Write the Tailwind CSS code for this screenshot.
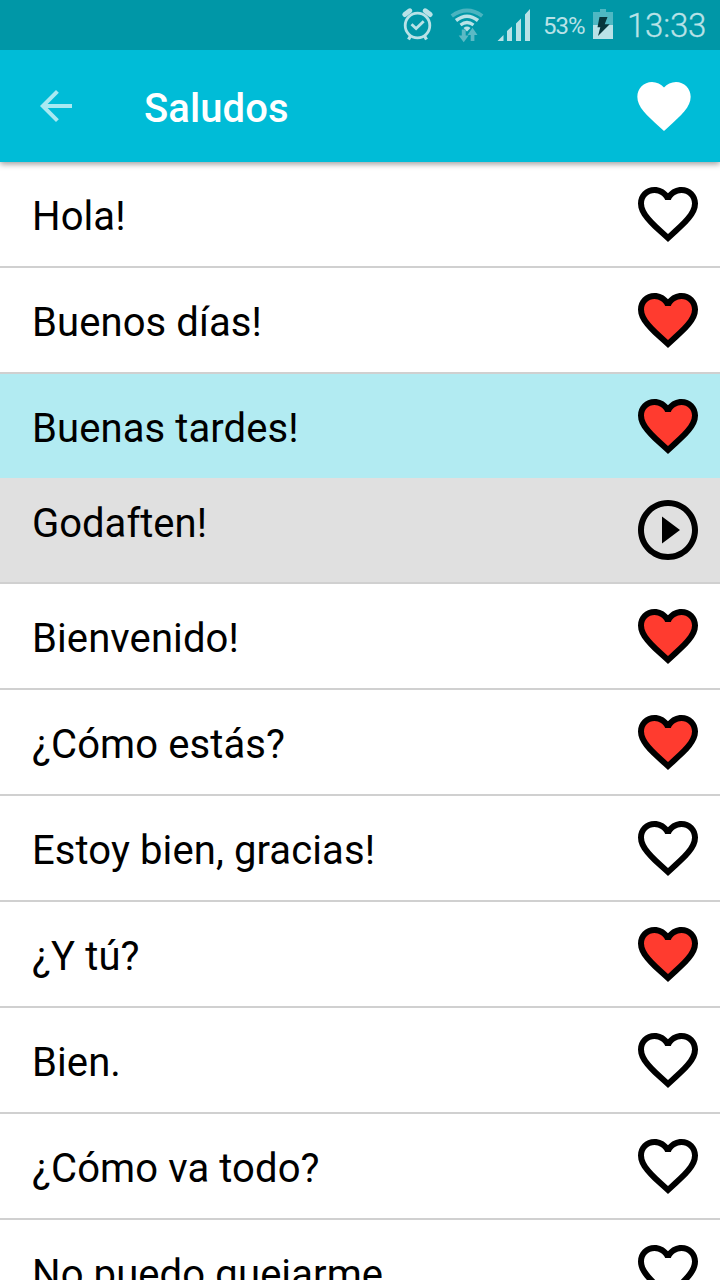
<!DOCTYPE html>
<html lang="es">
<head>
    <meta charset="UTF-8">
    <meta name="viewport" content="width=device-width, initial-scale=1.0">
    <title>Saludos</title>
    <script src="https://cdn.jsdelivr.net/npm/@tailwindcss/browser@4"></script>
</head>
<body class="h-screen overflow-hidden bg-white font-['Roboto',sans-serif] text-black">
    <!-- Status bar -->
    <div class="relative z-10 flex h-[50px] items-center bg-[#0097a7] pl-[400px] text-[#b9e2e7]">
        <svg class="h-[50px] w-[134px] shrink-0" viewBox="400 0 134 50" fill="none" stroke="currentColor">
            <!-- alarm -->
            <circle cx="417.5" cy="25.5" r="12.3" stroke-width="2.8"/>
            <path d="M411.5 24.2l4.600 4.300 7.600-7.300" stroke-width="2.800"/>
            <path d="M404.800 14.600l5-3.800M430.200 14.600l-5-3.800" stroke-width="5" stroke-linecap="round"/>
            <path d="M410.500 36l-2 3.500M424.500 36l2 3.500" stroke-width="3.200"/>
            <!-- wifi -->
            <path d="M451.800 16q15.200-11 30.400 0" stroke-width="4" opacity=".4"/>
            <path d="M456 20.500q11-8.500 22 0" stroke-width="3.600"/>
            <path d="M460.500 25q6.500-5 13 0" stroke-width="3.200"/>
            <path d="M463.500 28q3.500-2.800 7 0l-3.500 3.500z" fill="currentColor" stroke="none"/>
            <path d="M461.800 29.500h3.900v6h3l-5 6.800-5-6.800h3.100zM470.700 41v-6h-3.200l5-7.200 5 7.200h-3.100v6z" fill="#5bbac5" stroke="none"/>
            <!-- signal -->
            <path d="M497.500 41l6-6v6zM507 41v-10l5-4.500v14.500zM516 41v-17.500l5-5v22.500zM525 41v-26.500l5-5.500v32z" fill="currentColor" stroke="none"/>
        </svg>
        <span class="ml-[9px] w-[50px] pt-[2px] text-[24px] tracking-[-1px]">53%</span>
        <svg class="h-[50px] w-[20px] shrink-0" viewBox="593 0 20 50">
            <path d="M593 12h7V9h6v3h7v13h-20z" fill="#4fb8c3"/>
            <path d="M593 25h20v14h-20z" fill="#b9e2e7"/>
            <path d="M599.500 17h8l-2.800 7.200h5L598 36l2.300-8.800h-2.800z" fill="#07363c"/>
        </svg>
        <span class="ml-[14px] pt-[2px] text-[33px] font-light tracking-[-0.2px] [-webkit-text-stroke:0.3px_#b9e2e7]">13:33</span>
    </div>

    <!-- Toolbar -->
    <header class="relative flex h-28 items-center bg-[#00bcd7] pr-6 pl-8 shadow-[0_2px_6px_rgba(0,0,0,0.4)]">
        <svg class="size-12 text-[#a9e9f2]" viewBox="0 0 24 24" fill="currentColor"><path d="M20 11H7.830l5.590-5.590L12 4l-8 8 8 8 1.410-1.410L7.830 13H20v-2z"/></svg>
        <h1 class="ml-16 flex-1 pt-1.5 text-[40px] leading-none font-medium tracking-[0.1px] text-white">Saludos</h1>
        <svg class="size-16 text-white" viewBox="0 0 24 24" fill="currentColor"><path d="M12 21.350l-1.450-1.320C5.400 15.360 2 12.280 2 8.500 2 5.420 4.420 3 7.500 3c1.740 0 3.410.81 4.500 2.090C13.090 3.810 14.760 3 16.500 3 19.580 3 22 5.420 22 8.500c0 3.780-3.400 6.860-8.550 11.540L12 21.350z"/></svg>
    </header>

    <ul id="frases"></ul>

    <script>
        const frases = [
            { texto: "Hola!", favorito: false },
            { texto: "Buenos días!", favorito: true },
            { texto: "Buenas tardes!", favorito: true, traduccion: "Godaften!" },
            { texto: "Bienvenido!", favorito: true },
            { texto: "¿Cómo estás?", favorito: true },
            { texto: "Estoy bien, gracias!", favorito: false },
            { texto: "¿Y tú?", favorito: true },
            { texto: "Bien.", favorito: false },
            { texto: "¿Cómo va todo?", favorito: false },
            { texto: "No puedo quejarme.", favorito: false }
        ];

        const corazon = (lleno) => `<svg class="size-[72px] shrink-0" viewBox="0 0 24 24">
            <path fill="${lleno ? "#ff3b2f" : "none"}" d="M12 20l-1.500-1.300C5.700 14.400 3 11.800 3 8.500 3 5.900 5 4 7.500 4c1.900 0 3.500 1 4.500 2.600C13 5 14.600 4 16.500 4 19 4 21 5.900 21 8.500c0 3.300-2.700 5.900-7.500 10.200z"/>
            <path d="M16.500 3c-1.740 0-3.410.81-4.500 2.090C10.910 3.810 9.240 3 7.500 3 4.420 3 2 5.420 2 8.500c0 3.780 3.400 6.860 8.550 11.540L12 21.350l1.450-1.320C18.600 15.360 22 12.280 22 8.500 22 5.420 19.580 3 16.500 3zm-4.400 15.550l-.1.1-.1-.1C7.140 14.240 4 11.390 4 8.500 4 6.500 5.500 5 7.500 5c1.540 0 3.040.99 3.570 2.360h1.870C13.460 5.990 14.960 5 16.500 5c2 0 3.500 1.500 3.500 3.500 0 2.890-3.140 5.740-7.900 10.050z"/>
        </svg>`;

        const reproducir = `<svg class="size-[72px] shrink-0" viewBox="0 0 24 24">
            <path d="M10 16.500l6-4.500-6-4.500v9zM12 2C6.480 2 2 6.480 2 12s4.480 10 10 10 10-4.480 10-10S17.520 2 12 2zm0 18c-4.410 0-8-3.590-8-8s3.590-8 8-8 8 3.590 8 8-3.590 8-8 8z"/>
        </svg>`;

        const lista = document.getElementById("frases");
        frases.forEach(frase => {
            const fila = `<li class="border-b-2 border-[#d0d0d0]">
                <div class="flex h-[104px] items-center justify-between pr-4 pl-8 ${frase.traduccion ? "bg-[#b2ebf2]" : ""}">
                    <span class="pt-1.5 text-[40px] leading-none tracking-[0.1px]">${frase.texto}</span>
                    ${corazon(frase.favorito)}
                </div>
                ${frase.traduccion ? `<div class="flex h-[104px] items-center justify-between bg-[#e0e0e0] pr-4 pl-8">
                    <span class="pb-3 text-[40px] leading-none">${frase.traduccion}</span>
                    ${reproducir}
                </div>` : ""}
            </li>`;
            lista.insertAdjacentHTML("beforeend", fila);
        });
    </script>
</body>
</html>
